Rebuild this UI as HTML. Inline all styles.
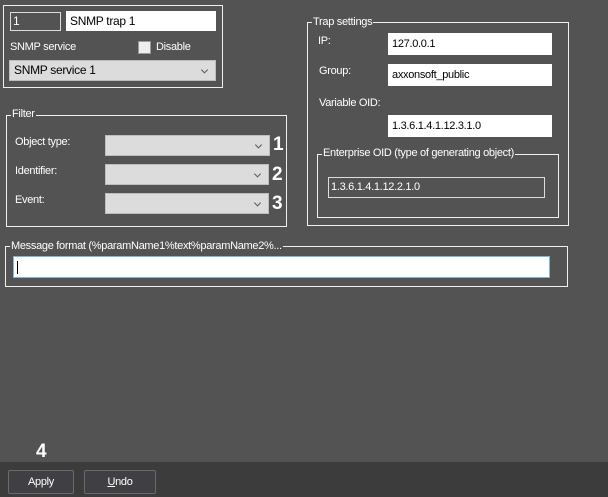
<!DOCTYPE html>
<html><head><style>
*{margin:0;padding:0;box-sizing:border-box}
body{width:608px;height:497px;background:#535353;position:relative;overflow:hidden;font-family:"Liberation Sans",sans-serif;font-size:11px;color:#fff}
.a{position:absolute}
.box{position:absolute;border:1px solid #f0f0f0}
.lg{position:absolute;background:#535353;padding:0 1px;line-height:12px;letter-spacing:-0.3px}
.t{position:absolute;line-height:13px;letter-spacing:-0.3px}
.w{position:absolute;background:#fff;color:#000;line-height:20px;padding-left:4px;letter-spacing:-0.3px}
.cb{position:absolute;background:#dcdcdc;border:1px solid #bdbdbd}
.cb:after{content:"";position:absolute;right:8px;top:50%;width:4px;height:4px;border-right:1px solid #555;border-bottom:1px solid #555;transform:translateY(-70%) rotate(45deg)}
.n{position:absolute;font-weight:bold;font-size:19px;line-height:20px}
.btn{position:absolute;border:1px solid #6a6a6a;border-radius:2px;background:#3f3f44;text-align:center;line-height:22px;font-size:11px;letter-spacing:-0.3px}
</style></head><body>
<div class="box" style="left:3px;top:5px;width:220px;height:83px"></div>
<div class="a" style="left:10px;top:12px;width:51px;height:19px;border:1px solid #ddd;line-height:17px;padding-left:2px;font-size:12px">1</div>
<div class="w" style="left:66px;top:11px;width:150px;height:20px;font-size:12px">SNMP trap 1</div>
<div class="t" style="left:10px;top:41px">SNMP service</div>
<div class="a" style="left:138px;top:41px;width:13px;height:13px;background:#eee;border:1px solid #999"></div>
<div class="t" style="left:156px;top:41px">Disable</div>
<div class="cb" style="left:9px;top:60px;width:207px;height:21px;color:#000;line-height:19px;padding-left:4px;font-size:12px;letter-spacing:-0.3px">SNMP service 1</div>

<div class="box" style="left:6px;top:115px;width:281px;height:112px"></div>
<div class="lg" style="left:11px;top:108px">Filter</div>
<div class="t" style="left:15px;top:136px">Object type:</div>
<div class="t" style="left:15px;top:165px">Identifier:</div>
<div class="t" style="left:15px;top:194px">Event:</div>
<div class="cb" style="left:105px;top:135px;width:165px;height:21px"></div>
<div class="cb" style="left:105px;top:164px;width:164px;height:21px"></div>
<div class="cb" style="left:105px;top:193px;width:164px;height:21px"></div>
<div class="n" style="left:273px;top:135px">1</div>
<div class="n" style="left:272px;top:165px">2</div>
<div class="n" style="left:272px;top:194px">3</div>

<div class="box" style="left:307px;top:22px;width:262px;height:204px"></div>
<div class="lg" style="left:312px;top:16px">Trap settings</div>
<div class="t" style="left:318px;top:35px">IP:</div>
<div class="t" style="left:319px;top:65px">Group:</div>
<div class="t" style="left:319px;top:97px">Variable OID:</div>
<div class="w" style="left:388px;top:33px;width:164px;height:22px;line-height:22px">127.0.0.1</div>
<div class="w" style="left:388px;top:64px;width:164px;height:22px;line-height:22px">axxonsoft_public</div>
<div class="w" style="left:388px;top:115px;width:164px;height:22px;line-height:22px">1.3.6.1.4.1.12.3.1.0</div>
<div class="box" style="left:317px;top:154px;width:242px;height:64px"></div>
<div class="lg" style="left:322px;top:147px">Enterprise OID (type of generating object)</div>
<div class="a" style="left:328px;top:177px;width:217px;height:21px;border:1px solid #ddd;line-height:18px;padding-left:2px;letter-spacing:-0.3px">1.3.6.1.4.1.12.2.1.0</div>

<div class="box" style="left:5px;top:246px;width:563px;height:41px"></div>
<div class="lg" style="left:10px;top:240px">Message format (%paramName1%text%paramName2%...</div>
<div class="a" style="left:13px;top:256px;width:537px;height:22px;background:#fff;border:1px solid #7ab8e0"><div class="a" style="left:3px;top:4px;width:1px;height:13px;background:#000"></div></div>

<div class="n" style="left:36px;top:442px">4</div>
<div class="a" style="left:0;top:462px;width:608px;height:35px;background:#3c3c3c"></div>
<div class="btn" style="left:8px;top:470px;width:66px;height:24px">Apply</div>
<div class="btn" style="left:84px;top:470px;width:72px;height:24px"><u>U</u>ndo</div>
</body></html>
